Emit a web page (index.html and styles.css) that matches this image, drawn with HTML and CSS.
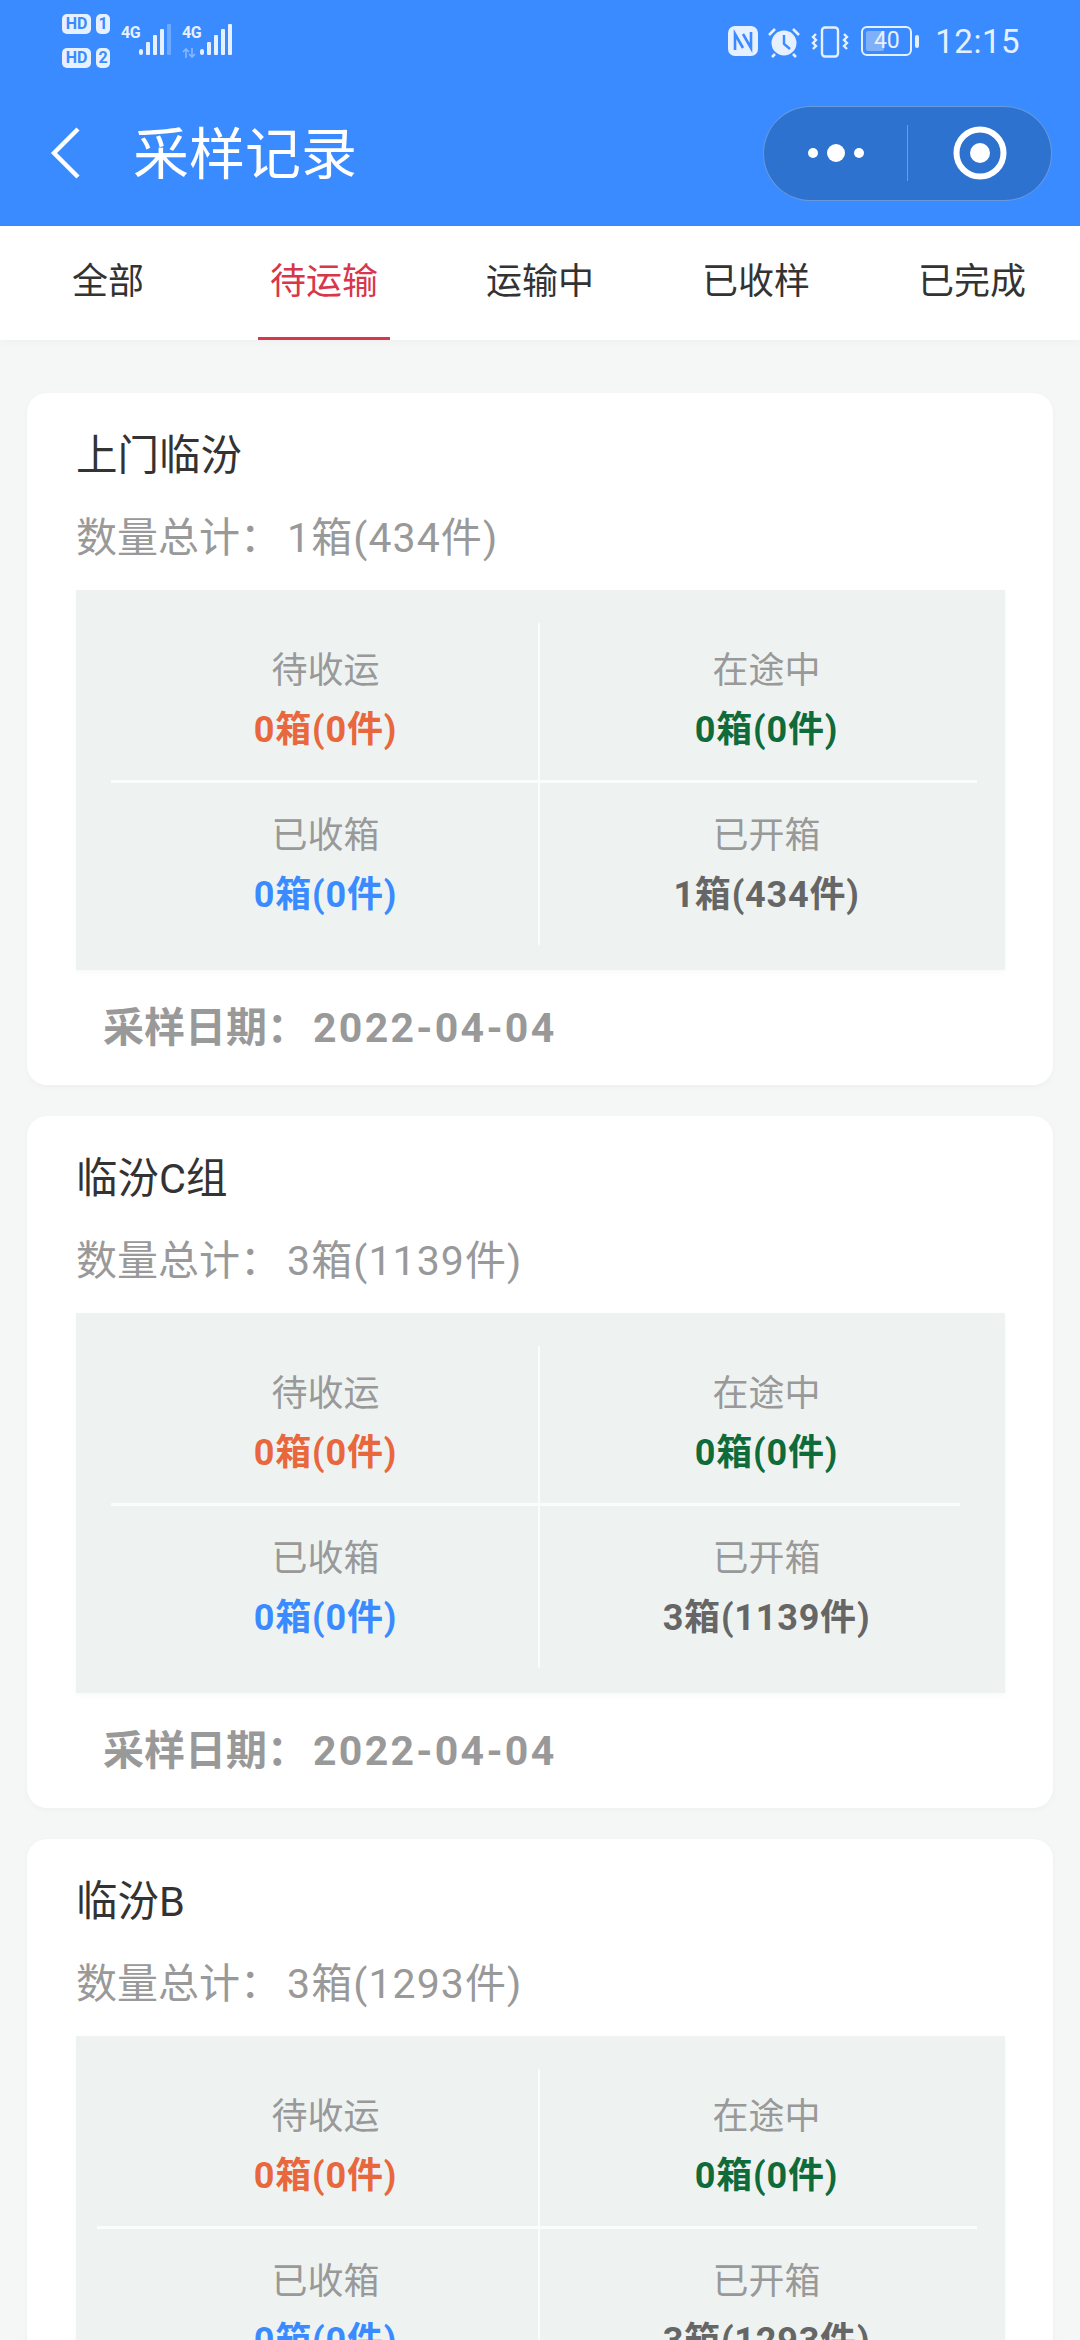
FILE: index.html
```html
<!doctype html>
<html lang="zh-CN">
  <head>
    <meta charset="utf-8">
    <meta name="viewport" content="width=device-width, initial-scale=1">
    <title>采样记录</title>
    <link rel="stylesheet" href="styles.css">
  </head>
  <body>
    <header class="top">
      <div class="status">
        <div class="status-left">
          <div class="sims">
            <div class="sim"><span class="hd">HD</span><span class="slot">1</span></div>
            <div class="sim"><span class="hd">HD</span><span class="slot">2</span></div>
          </div>
          <div class="net">
            <span class="net-label">4G</span>
            <svg class="bars" width="34" height="32" viewBox="0 0 34 32">
              <rect x="0" y="25" width="4" height="6" rx="2" fill="#e6f0ff"/>
              <rect x="7" y="18" width="4" height="13" rx="1" fill="#e6f0ff"/>
              <rect x="14" y="11" width="4" height="20" rx="1" fill="#e6f0ff"/>
              <rect x="21" y="5" width="4" height="26" rx="1" fill="#e6f0ff"/>
              <rect x="28" y="0" width="4" height="31" rx="1" fill="#e6f0ff" opacity=".3"/>
            </svg>
          </div>
          <div class="net">
            <div class="net-side">
              <span class="net-label">4G</span>
              <svg class="net-arrows" width="14" height="10" viewBox="0 0 14 10">
                <path d="M4 10V1M1 4l3-3 3 3M10 0v9M7 6l3 3 3-3" fill="none" stroke="#e6f0ff" stroke-width="1.6" opacity=".45"/>
              </svg>
            </div>
            <svg class="bars" width="34" height="32" viewBox="0 0 34 32">
              <rect x="0" y="25" width="4" height="6" rx="2" fill="#e6f0ff"/>
              <rect x="7" y="18" width="4" height="13" rx="1" fill="#e6f0ff"/>
              <rect x="14" y="11" width="4" height="20" rx="1" fill="#e6f0ff"/>
              <rect x="21" y="5" width="4" height="26" rx="1" fill="#e6f0ff"/>
              <rect x="28" y="0" width="4" height="31" rx="1" fill="#e6f0ff"/>
            </svg>
          </div>
        </div>
        <div class="status-right">
          <svg width="30" height="30" viewBox="0 0 30 30">
            <rect x="0" y="0" width="30" height="30" rx="7" fill="#e6f0ff"/>
            <path d="M7 24V8l8 14M23 6v16L15 8" fill="none" stroke="#3a8bff" stroke-width="2.6"/>
          </svg>
          <svg width="34" height="32" viewBox="0 0 34 32">
            <circle cx="17" cy="17" r="12.5" fill="#e6f0ff"/>
            <path d="M17 9v9l6 5" fill="none" stroke="#3a8bff" stroke-width="2.4"/>
            <path d="M2 9l6-6M32 9l-6-6M8 28l-3 3M26 28l3 3" stroke="#e6f0ff" stroke-width="2.6" fill="none"/>
          </svg>
          <svg width="38" height="32" viewBox="0 0 38 32">
            <rect x="11" y="1.5" width="16" height="29" rx="3" fill="none" stroke="#e6f0ff" stroke-width="2.4"/>
            <path d="M5 8l-3 3 3 3-3 3 3 3-3 3M33 8l3 3-3 3 3 3-3 3 3 3" fill="none" stroke="#e6f0ff" stroke-width="2.4"/>
          </svg>
          <div class="battery">
            <div class="battery-body"><span class="battery-level"></span><span class="battery-text">40</span></div>
            <span class="battery-cap"></span>
          </div>
          <span class="clock">12:15</span>
        </div>
      </div>
      <div class="nav">
        <svg class="back" width="32" height="54" viewBox="0 0 32 54">
          <path d="M28 3L4 27l24 24" fill="none" stroke="#fff" stroke-width="4.4"/>
        </svg>
        <h1 class="nav-title">采样记录</h1>
        <div class="capsule">
          <div class="capsule-btn">
            <svg width="64" height="20" viewBox="0 0 64 20">
              <circle cx="9" cy="10" r="5" fill="#fff"/>
              <circle cx="32" cy="10" r="9" fill="#fff"/>
              <circle cx="55" cy="10" r="5" fill="#fff"/>
            </svg>
          </div>
          <span class="capsule-line"></span>
          <div class="capsule-btn">
            <svg width="54" height="54" viewBox="0 0 54 54">
              <circle cx="27" cy="27" r="23.5" fill="none" stroke="#fff" stroke-width="6"/>
              <circle cx="27" cy="27" r="10" fill="#fff"/>
            </svg>
          </div>
        </div>
      </div>
    </header>

    <nav class="tabs">
      <a class="tab">全部</a>
      <a class="tab tab-active">待运输</a>
      <a class="tab">运输中</a>
      <a class="tab">已收样</a>
      <a class="tab">已完成</a>
    </nav>

    <main class="list">
      <section class="card">
        <h2 class="card-title">上门临汾</h2>
        <p class="card-total">数量总计：<span class="total-num">1箱(434件)</span></p>
        <div class="box">
          <div class="stats">
            <div class="cell cell-top"><div class="label">待收运</div><div class="value orange">0箱(0件)</div></div>
            <div class="cell cell-top cell-right"><div class="label">在途中</div><div class="value green">0箱(0件)</div></div>
            <div class="cell cell-bottom"><div class="label">已收箱</div><div class="value blue">0箱(0件)</div></div>
            <div class="cell cell-bottom cell-right"><div class="label">已开箱</div><div class="value grey">1箱(434件)</div></div>
          </div>
        </div>
        <p class="card-date">采样日期：<span class="date-num">2022-04-04</span></p>
      </section>

      <section class="card">
        <h2 class="card-title">临汾C组</h2>
        <p class="card-total">数量总计：<span class="total-num">3箱(1139件)</span></p>
        <div class="box">
          <div class="stats stats-narrow">
            <div class="cell cell-top"><div class="label">待收运</div><div class="value orange">0箱(0件)</div></div>
            <div class="cell cell-top cell-right"><div class="label">在途中</div><div class="value green">0箱(0件)</div></div>
            <div class="cell cell-bottom"><div class="label">已收箱</div><div class="value blue">0箱(0件)</div></div>
            <div class="cell cell-bottom cell-right"><div class="label">已开箱</div><div class="value grey">3箱(1139件)</div></div>
          </div>
        </div>
        <p class="card-date">采样日期：<span class="date-num">2022-04-04</span></p>
      </section>

      <section class="card">
        <h2 class="card-title">临汾B</h2>
        <p class="card-total">数量总计：<span class="total-num">3箱(1293件)</span></p>
        <div class="box">
          <div class="stats stats-wide">
            <div class="cell cell-top"><div class="label">待收运</div><div class="value orange">0箱(0件)</div></div>
            <div class="cell cell-top cell-right"><div class="label">在途中</div><div class="value green">0箱(0件)</div></div>
            <div class="cell cell-bottom"><div class="label">已收箱</div><div class="value blue">0箱(0件)</div></div>
            <div class="cell cell-bottom cell-right"><div class="label">已开箱</div><div class="value grey">3箱(1293件)</div></div>
          </div>
        </div>
        <p class="card-date">采样日期：<span class="date-num">2022-04-04</span></p>
      </section>
    </main>
  </body>
</html>
```

FILE: styles.css
```css
* {
  box-sizing: border-box;
}
html, body {
  margin: 0;
  height: 2340px;
  overflow: hidden;
}
body {
  width: 1080px;
  background-color: #f5f6f6;
  color: #333;
  font-family: Roboto, "Noto Sans CJK SC", sans-serif;
}
h1, h2, p {
  margin: 0;
  font-weight: 400;
}

/* blue header */
.top {
  height: 226px;
  background-color: #3a8bff;
  color: #fff;
}
.status {
  height: 70px;
  padding: 14px 60px 0 62px;
  display: flex;
  justify-content: space-between;
}
.status-left {
  display: flex;
  gap: 11px;
}
.sims {
  display: flex;
  flex-direction: column;
  gap: 14px;
}
.sim {
  display: flex;
  gap: 5px;
}
.hd, .slot {
  height: 20px;
  border-radius: 5px;
  background-color: #e6f0ff;
  color: #3a8bff;
  font-size: 16px;
  line-height: 20px;
  font-weight: 700;
  text-align: center;
}
.hd {
  width: 29px;
}
.slot {
  width: 14px;
}
.net {
  display: flex;
  align-items: flex-start;
  padding-top: 10px;
}
.net + .net {
  margin-left: -2px;
}
.net-side {
  display: flex;
  flex-direction: column;
  width: 18px;
  gap: 8px;
}
.net-label {
  width: 18px;
  margin-top: 1px;
  color: #e6f0ff;
  font-size: 16px;
  line-height: 15px;
  font-weight: 700;
  letter-spacing: -.5px;
}
.status-right {
  display: flex;
  align-items: flex-start;
  gap: 10px;
  padding-top: 12px;
}
.status-right svg:first-child {
  margin-right: -1px;
}
.battery {
  display: flex;
  align-items: center;
  gap: 3px;
  height: 30px;
  margin-left: 2px;
}
.battery-body {
  position: relative;
  width: 51px;
  height: 30px;
  border: 2px solid #e6f0ff;
  border-radius: 6px;
}
.battery-level {
  position: absolute;
  left: 3px;
  top: 3px;
  bottom: 3px;
  width: 18px;
  border-radius: 2px;
  background-color: #7fb0f8;
}
.battery-text {
  position: relative;
  display: block;
  text-align: center;
  color: #e6f0ff;
  font-size: 23px;
  line-height: 26px;
}
.battery-cap {
  width: 4px;
  height: 13px;
  border-radius: 2px;
  background-color: #e6f0ff;
}
.clock {
  margin: -3px 0 0 6px;
  color: #e6f0ff;
  font-size: 33px;
  line-height: 38px;
  letter-spacing: .5px;
}
.nav {
  height: 156px;
  padding: 10px 28px 0 50px;
  display: flex;
  align-items: center;
}
.back {
  flex: none;
}
.nav-title {
  flex: 1;
  margin: 3px 0 0 51px;
  font-size: 56px;
  line-height: 70px;
}
.capsule {
  width: 289px;
  height: 95px;
  border: 1px solid rgba(255, 255, 255, .28);
  border-radius: 48px;
  background-color: #2d72cf;
  display: flex;
  align-items: center;
}
.capsule-btn {
  flex: 1;
  display: flex;
  align-items: center;
  justify-content: center;
}
.capsule-line {
  width: 1px;
  height: 56px;
  background-color: rgba(255, 255, 255, .3);
}

/* tabs */
.tabs {
  height: 114px;
  background-color: #fff;
  display: grid;
  grid-template-columns: repeat(5, 216px);
  box-shadow: 0 2px 8px rgba(0, 0, 0, .03);
}
.tab {
  position: relative;
  text-align: center;
  font-size: 36px;
  line-height: 112px;
  color: #333;
}
.tab-active {
  color: #d8364a;
}
.tab-active::after {
  content: "";
  position: absolute;
  left: 42px;
  right: 42px;
  bottom: 0;
  height: 3px;
  background-color: #d8364a;
}

/* cards */
.list {
  padding: 53px 27px 0;
  display: flex;
  flex-direction: column;
  gap: 31px;
}
.card {
  height: 692px;
  flex: none;
  padding: 35px 48px 30px 49px;
  border-radius: 20px;
  background-color: #fff;
  box-shadow: 0 2px 6px rgba(0, 0, 0, .03);
}
.card-title {
  font-size: 41.5px;
  line-height: 56px;
  color: #333;
}
.card-total {
  margin-top: 26px;
  font-size: 41px;
  line-height: 56px;
  color: #999;
}
.total-num {
  margin-left: 6px;
  letter-spacing: 1.1px;
}
.box {
  margin-top: 24px;
  padding: 33px 28px 25px 35px;
  height: 380px;
  background-color: #eef3f2;
  box-shadow: 0 2px 6px rgba(0, 0, 0, .03);
}
.stats {
  display: grid;
  grid-template-columns: 427px 1fr;
}
.stats-narrow {
  margin-right: 17px;
}
.stats-wide {
  margin-left: -14px;
  grid-template-columns: 441px 1fr;
}
.cell {
  text-align: center;
}
.cell-top {
  height: 157px;
  padding-top: 30px;
}
.cell-bottom {
  height: 165px;
  padding-top: 35px;
  border-top: 3px solid #fbfdfd;
}
.cell:not(.cell-right) {
  padding-left: 2px;
}
.cell-right {
  padding-left: 16px;
  border-left: 2px solid #fbfdfd;
}
.stats-narrow .cell-right {
  padding-left: 33px;
}
.stats-wide .cell:not(.cell-right) {
  padding-left: 16px;
}
.label {
  font-size: 36px;
  line-height: 36px;
  color: #999;
}
.value {
  margin-top: 23px;
  font-size: 36px;
  line-height: 36px;
  font-weight: 700;
  letter-spacing: .8px;
}
.orange {
  color: #e8673c;
}
.green {
  color: #0f6b3a;
}
.blue {
  color: #3a8bff;
}
.grey {
  color: #666;
}
.card-date {
  margin: 30px 0 0 27px;
  font-size: 41px;
  line-height: 56px;
  font-weight: 700;
  color: #999;
}
.date-num {
  margin-left: 5px;
  letter-spacing: 2.3px;
}
```
